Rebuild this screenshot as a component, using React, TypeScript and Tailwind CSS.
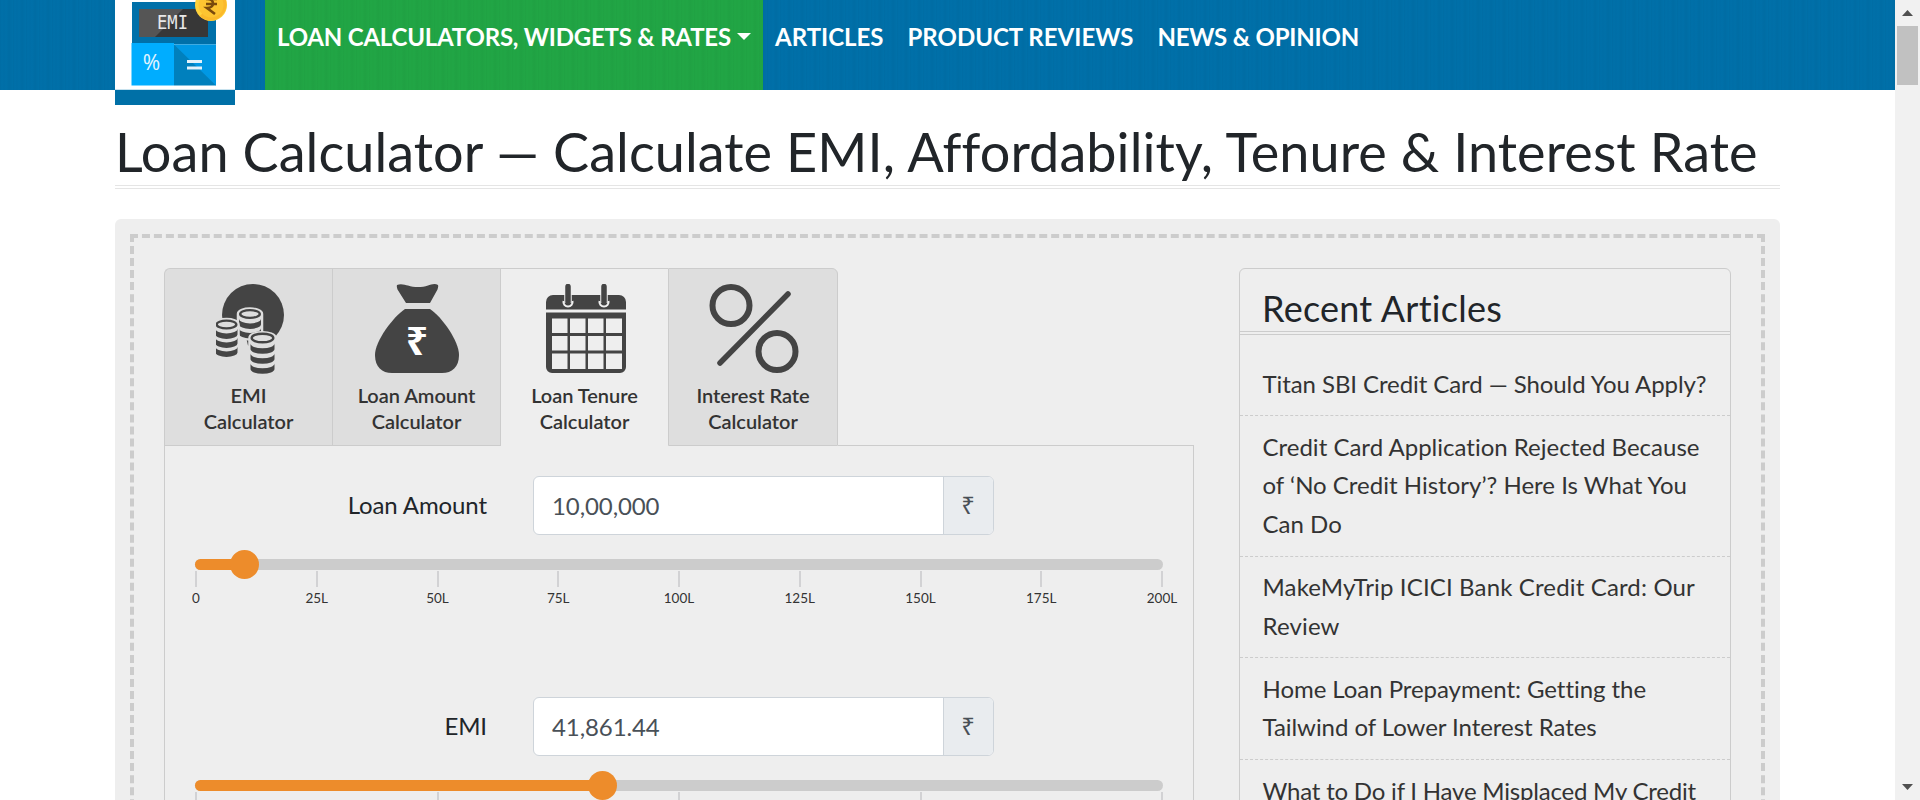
import type { ReactNode } from "react";

const texture =
  "bg-[repeating-linear-gradient(90deg,rgba(0,0,0,0.03)_0px,rgba(0,0,0,0)_2px,rgba(0,0,0,0.02)_4px,rgba(0,0,0,0)_6px,rgba(0,0,0,0.03)_9px,rgba(0,0,0,0)_13px)]";

function Logo() {
  return (
    <svg viewBox="0 0 120 105" className="block h-[105px] w-[120px]">
      <rect width="120" height="89" fill="#fff" />
      <rect y="89" width="120" height="1" fill="#c8e2ee" />
      <rect y="90" width="120" height="15" fill="#0070a7" />
      <rect x="17" y="2" width="84" height="42" fill="#0070a9" />
      <rect x="24" y="9" width="69" height="28" fill="#373737" />
      <path d="M24 9h44L40 37H24z" fill="#555" />
      <text x="57.500" y="28.500" textAnchor="middle" fontFamily="'DejaVu Sans Mono', monospace" fontSize="19" fill="#e8e8e8" textLength="31" lengthAdjust="spacingAndGlyphs">EMI</text>
      <rect x="16.500" y="43" width="42.500" height="42.500" fill="#00adff" />
      <rect x="59" y="44.500" width="42" height="41" fill="#0080bd" />
      <path d="M59 44.500h42v41z" fill="#0098e4" />
      <text x="36.500" y="70" textAnchor="middle" fontFamily="'Noto Sans', sans-serif" fontSize="21" fill="#dff3ff">%</text>
      <path d="M72 61.500h15M72 68h15" stroke="#e3f2fa" strokeWidth="3" />
      <circle cx="96" cy="5" r="16" fill="#ffd23c" />
      <path d="M84.700 16.300a16 16 0 0 0 22.600-22.600z" fill="#fbb92b" />
      <circle cx="96" cy="5" r="12.500" fill="#fdc431" />
      <path d="M91 -1h11M91 4h11M92-1c8 0 8 9 0 9l8 6" fill="none" stroke="#7a4a0c" strokeWidth="2.600" />
    </svg>
  );
}

function CoinStack({ x, y, rx, n, step }: { x: number; y: number; rx: number; n: number; step: number }) {
  const ry = rx * 0.4;
  const rows = Array.from({ length: n }, (_, i) => i + 1);
  return (
    <g>
      <path
        d={`M${x - rx} ${y}a${rx} ${ry} 0 0 1 ${rx * 2} 0v${n * step + 1}a${rx} ${ry} 0 0 1 ${-rx * 2} 0z`}
        fill="#dedede"
        stroke="#dedede"
        strokeWidth="4.500"
      />
      <ellipse cx={x} cy={y} rx={rx - 1.2} ry={ry - 0.5} fill="#dedede" stroke="#444" strokeWidth="2.400" />
      {rows.map((i) => (
        <path
          key={i}
          d={`M${x - rx} ${y + i * step - 4.5}a${rx} ${ry} 0 0 0 ${rx * 2} 0v5.500a${rx} ${ry} 0 0 1 ${-rx * 2} 0z`}
          fill="#444"
        />
      ))}
    </g>
  );
}

function CoinsIcon() {
  return (
    <svg viewBox="0 0 68 90" className="ml-[2px] h-[90px] w-[68px]">
      <circle cx="37" cy="31" r="31" fill="#444" />
      <path d="M-2 36H26L34 70H-2z" fill="#dedede" />
      <CoinStack x={34} y={30} rx={11} n={2} step={9.5} />
      <CoinStack x={10.5} y={40.5} rx={11} n={3} step={9} />
      <CoinStack x={46.500} y={54} rx={12} n={3} step={10} />
    </svg>
  );
}

function BagIcon() {
  return (
    <svg viewBox="0 0 84 90" className="h-[90px] w-[84px]">
      <path d="M22 1C26-1 30 1 33 1.500c6 2 14 2 20 0C56 .5 60-1 63 1c.5 1.500 0 3-.5 4.500L55 19H31L22.500 5.500C22 4 21.500 2.500 22 1z" fill="#444" />
      <path d="M30 25h25C67 33 84 57 84 71c0 12-7 18-17 18H17C7 89 0 83 0 71 0 57 18 33 30 25z" fill="#444" />
      <text x="42" y="70.500" textAnchor="middle" fontFamily="'Noto Sans', sans-serif" fontWeight="700" fontSize="39" fill="#fff">₹</text>
    </svg>
  );
}

function CalendarIcon() {
  return (
    <svg viewBox="0 0 80 90" className="ml-[2px] h-[90px] w-[80px]">
      <path d="M0 25.500V18a7 7 0 0 1 7-7h66a7 7 0 0 1 7 7v7.500z" fill="#444" />
      <path d="M17.500 17a4.600 4.600 0 1 0 9 0M53.500 17a4.600 4.600 0 1 0 9 0" fill="none" stroke="#eee" strokeWidth="2" />
      <path d="M22 9V19M58 9V19" stroke="#eee" strokeWidth="7.500" />
      <path d="M22 2.500V18M58 2.500V18" stroke="#444" strokeWidth="5.500" strokeLinecap="round" />
      <path
        fillRule="evenodd"
        d="M0 28.500H80V83a6 6 0 0 1-6 6H6a6 6 0 0 1-6-6zM6 34.500V49H21.500V34.500zM24 34.500V49H39.500V34.500zM42 34.500V49H57.500V34.500zM60 34.500V49H76V34.500zM6 52V66.500H21.500V52zM24 52V66.500H39.500V52zM42 52V66.500H57.500V52zM60 52V66.500H76V52zM6 69.500V85H21.500V69.500zM24 69.500V85H39.500V69.500zM42 69.500V85H57.500V69.500zM60 69.500V85H76V69.500z"
        fill="#444"
      />
    </svg>
  );
}

function PercentIcon() {
  return (
    <svg viewBox="0 0 90 90" className="ml-[2px] h-[90px] w-[90px]" fill="none" stroke="#444">
      <circle cx="22" cy="21.500" r="18.500" strokeWidth="6" />
      <circle cx="68" cy="67.500" r="18.500" strokeWidth="6" />
      <path d="M11 79L79 10" strokeWidth="5.500" strokeLinecap="round" />
    </svg>
  );
}

function Tab({ icon, title, active, last, first }: { icon: ReactNode; title: string; active?: boolean; last?: boolean; first?: boolean }) {
  return (
    <div
      className={[
        "flex flex-col items-center border-t border-l border-[#ccc] pt-[15px] text-center",
        first ? "rounded-tl-md" : "",
        last ? "w-[170px] rounded-tr-md border-r" : "w-[168px]",
        active ? "h-[178px] bg-[#eee]" : "h-[178px] border-b bg-[#dedede]",
      ].join(" ")}
    >
      {icon}
      <div className="mt-[8px] text-[20px] leading-[26px] font-semibold tracking-[-0.030px] text-[#333]">
        {title}
        <br />
        Calculator
      </div>
    </div>
  );
}

type Tick = { at: number; label?: string };

function Field({ label, value, percent, ticks }: { label: string; value: string; percent: number; ticks: Tick[] }) {
  return (
    <div className="h-[221px] px-[30px]">
      <div className="flex items-center">
        <div className="w-[292px] pb-px text-right text-[24px] leading-[36px] tracking-[-0.1px] text-[#212529]">{label}</div>
        <div className="ml-[46px] flex h-[59px] w-[461px] overflow-hidden rounded-md border border-[#ced4da] bg-white">
          <div className="flex-1 pl-[18px] text-[24px] leading-[57px] tracking-[-0.1px] text-[#495057]">{value}</div>
          <div className="w-[50px] border-l border-[#ced4da] bg-[#e9ecef] pr-px text-center font-['Noto_Sans',sans-serif] text-[24px] leading-[55px] text-[#495057]">
            ₹
          </div>
        </div>
      </div>
      <div className="relative mt-[24px] h-[11px] w-[968px] rounded-full bg-[#ccc]">
        <div className="h-full rounded-full bg-[#ed8c2b]" style={{ width: `${percent}%` }} />
        <div className="absolute top-[-9px] -ml-[14.500px] h-[29px] w-[29px] rounded-full bg-[#ed8c2b]" style={{ left: `${percent}%` }} />
      </div>
      <div className="mt-px flex w-[968px] justify-between">
        {ticks.map((t) => (
          <div key={t.at} className="flex w-[2px] flex-col items-center">
            <div className="h-4 w-[2px] shrink-0 bg-[#d2d2d4]" />
            {t.label && <div className="mt-px text-[13.500px] leading-[20px] whitespace-nowrap text-[#333]">{t.label}</div>}
          </div>
        ))}
      </div>
    </div>
  );
}

const amountTicks: Tick[] = [0, 25, 50, 75, 100, 125, 150, 175, 200].map((n) => ({ at: n, label: n ? `${n}L` : "0" }));
const emiTicks: Tick[] = [0, 25, 50, 75, 100].map((n) => ({ at: n }));

const articles = [
  { text: "Titan SBI Credit Card — Should You Apply?", spacing: "tracking-[-0.080px]" },
  { text: "Credit Card Application Rejected Because of ‘No Credit History’? Here Is What You Can Do", spacing: "tracking-[0.010px]" },
  { text: "MakeMyTrip ICICI Bank Credit Card: Our Review", spacing: "tracking-[0.150px]" },
  { text: "Home Loan Prepayment: Getting the Tailwind of Lower Interest Rates", spacing: "tracking-[-0.050px]" },
  { text: "What to Do if I Have Misplaced My Credit Card?", spacing: "tracking-[-0.200px]" },
];

export default function App() {
  return (
    <div className="flex h-[800px] w-[1920px] overflow-hidden bg-white font-['Lato',sans-serif] [font-variant-ligatures:none]">
      <div className="h-full w-[1895px] overflow-hidden">
        <header className={`flex h-[90px] bg-[#0070a9] pl-[115px] ${texture}`}>
          <div className="h-[105px] w-[120px] shrink-0">
            <Logo />
          </div>
          <nav className="ml-[30px] flex text-[24px] leading-[36px] font-bold text-white">
            <a className={`flex h-[90px] w-[498px] bg-[#21a645] pt-[19px] pl-[12px] tracking-[-0.200px] whitespace-nowrap ${texture}`}>
              LOAN CALCULATORS, WIDGETS &amp; RATES
              <span className="mt-[14px] ml-[6px] h-0 w-0 border-x-[7px] border-t-[7px] border-x-transparent border-t-white" />
            </a>
            <a className="px-[12px] pt-[19px]">ARTICLES</a>
            <a className="px-[12px] pt-[19px]">PRODUCT REVIEWS</a>
            <a className="px-[12px] pt-[19px] tracking-[-0.200px]">NEWS &amp; OPINION</a>
          </nav>
        </header>

        <main className="pt-[30px] pl-[115px]">
          <h1 className="h-[69px] w-[1665px] border-b-4 border-double border-[#e5e5e5] text-[54px] leading-[63px] tracking-[0.070px] whitespace-nowrap text-[#212529]">
            Loan Calculator — Calculate EMI, Affordability, Tenure &amp; Interest Rate
          </h1>
          <div className="mt-[30px] h-[1000px] w-[1665px] rounded-md bg-[#eee] p-[15px]">
            <div className="flex h-full items-start border-4 border-dashed border-[#ccc] pt-[30px] pl-[30px]">
              <section className="w-[1030px]">
                <div className="flex">
                  <Tab first icon={<CoinsIcon />} title="EMI" />
                  <Tab icon={<BagIcon />} title="Loan Amount" />
                  <Tab active icon={<CalendarIcon />} title="Loan Tenure" />
                  <Tab last icon={<PercentIcon />} title="Interest Rate" />
                  <div className="mt-[177px] h-px flex-1 bg-[#ccc]" />
                </div>
                <div className="h-[700px] border-x border-[#ccc] pt-[30px]">
                  <Field label="Loan Amount" value="10,00,000" percent={5.15} ticks={amountTicks} />
                  <Field label="EMI" value="41,861.44" percent={42.1} ticks={emiTicks} />
                </div>
              </section>
              <aside className="ml-[45px] h-[800px] w-[492px] rounded-md border border-[#ccc]">
                <h2 className="h-[66px] border-b-4 border-double border-[#ccc] pt-[18px] pl-[22px] text-[36px] leading-[43px] tracking-[0.250px] text-[#212529]">
                  Recent Articles
                </h2>
                <ul className="pt-[18px]">
                  {articles.map((a) => (
                    <li key={a.text} className="border-b border-dashed border-[#ccc] px-[22.500px] pt-[11.500px] pb-[12.500px] text-[24px] leading-[38.400px] text-[#333]">
                      <span className={a.spacing}>{a.text}</span>
                    </li>
                  ))}
                </ul>
              </aside>
            </div>
          </div>
        </main>
      </div>
      <div className="flex h-full w-[25px] flex-col items-center bg-[#f1f1f1]">
        <svg viewBox="0 0 11 6" className="mt-[10px] h-[6px] w-[11px]">
          <path d="M0 6L5.500 0 11 6z" fill="#505050" />
        </svg>
        <div className="mt-[10px] h-[59px] w-[21px] bg-[#c1c1c1]" />
        <svg viewBox="0 0 11 6" className="mt-auto mb-[10px] h-[6px] w-[11px]">
          <path d="M0 0h11L5.500 6z" fill="#505050" />
        </svg>
      </div>
    </div>
  );
}
